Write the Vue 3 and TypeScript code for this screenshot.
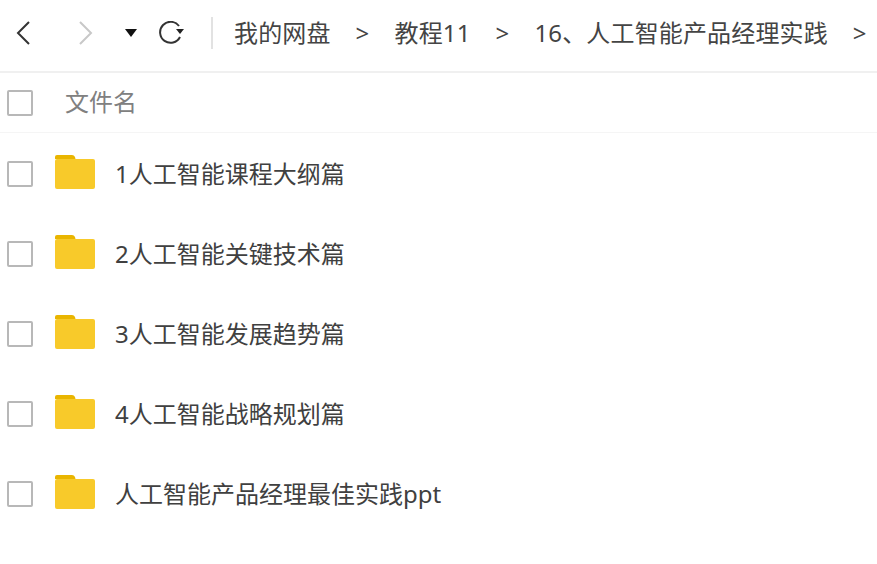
<template>
  <div class="page">
    <div class="toolbar">
      <div class="nav">
        <svg class="ic-back" width="14" height="24" viewBox="0 0 14 24" aria-hidden="true">
          <path d="M13 1 L2 12 L13 23" fill="none" stroke="#333" stroke-width="2" />
        </svg>
        <svg class="ic-forward" width="14" height="24" viewBox="0 0 14 24" aria-hidden="true">
          <path d="M1 1 L12 12 L1 23" fill="none" stroke="#c8c8c8" stroke-width="2" />
        </svg>
        <svg class="ic-caret" width="12" height="8" viewBox="0 0 12 8" aria-hidden="true">
          <path d="M0 0 H12 L6 8 Z" fill="#111" />
        </svg>
        <svg class="ic-refresh" width="26" height="24" viewBox="0 0 26 24" aria-hidden="true">
          <path d="M21 5 A10.5 10.5 0 1 0 22 16" fill="none" stroke="#333" stroke-width="2" />
          <path d="M18 8 H26 L22 13 Z" fill="#222" />
        </svg>
        <span class="divider"></span>
      </div>
      <div class="crumbs">
        <template v-for="c in crumbs" :key="c">
          <span class="crumb">{{ c }}</span>
          <span class="sep">&gt;</span>
        </template>
      </div>
    </div>

    <div class="head">
      <span class="check"></span>
      <span class="head-name">文件名</span>
    </div>

    <div v-for="f in files" :key="f" class="row">
      <span class="check"></span>
      <svg class="folder" width="40" height="34" viewBox="0 0 40 34" aria-hidden="true">
        <path d="M0 2 Q0 0 2 0 H17 Q19 0 20 2 L20.5 4 H0 Z" fill="#e9b500" />
        <path d="M0 6 Q0 4 2 4 H38 Q40 4 40 6 V32 Q40 34 38 34 H2 Q0 34 0 32 Z" fill="#f8ca2a" />
      </svg>
      <span class="name">{{ f }}</span>
    </div>
  </div>
</template>

<script setup lang="ts">
const crumbs: string[] = ['我的网盘', '教程11', '16、人工智能产品经理实践']

const files: string[] = [
  '1人工智能课程大纲篇',
  '2人工智能关键技术篇',
  '3人工智能发展趋势篇',
  '4人工智能战略规划篇',
  '人工智能产品经理最佳实践ppt',
]
</script>

<style>
html,
body {
  margin: 0;
  background: #fff;
  overflow: hidden;
}
</style>

<style scoped>
.page {
  width: 877px;
  height: 564px;
  overflow: hidden;
  font-family: "Noto Sans", "Noto Sans CJK SC", sans-serif;
  color: #3b3b3b;
}

.toolbar {
  display: flex;
  align-items: center;
  height: 66px;
  padding-bottom: 5px;
  border-bottom: 2px solid #f0f0f0;
  white-space: nowrap;
}

.nav {
  display: flex;
  align-items: center;
  flex: none;
  padding-left: 16px;
}

.ic-back { margin-right: 49px; }
.ic-forward { margin-right: 32px; }
.ic-caret { margin-right: 22px; }
.ic-refresh { margin-left: -1px; margin-right: 27px; }

.divider {
  width: 2px;
  height: 32px;
  background: #e2e2e2;
}

.crumbs {
  display: flex;
  align-items: center;
  margin-left: 21px;
  font-size: 24px;
  line-height: 32px;
  letter-spacing: 0.15px;
  color: #444;
}

.sep {
  margin: 0 25px;
  color: #444;
}

.head {
  display: flex;
  align-items: center;
  height: 59px;
  padding-left: 7px;
  border-bottom: 1px solid #f5f5f5;
  margin-bottom: 1px;
}

.head-name {
  margin-left: 32px;
  margin-bottom: 2px;
  font-size: 24px;
  line-height: 32px;
  color: #808080;
}

.row {
  display: flex;
  align-items: center;
  height: 80px;
  padding-left: 7px;
}

.check {
  flex: none;
  width: 26px;
  height: 26px;
  box-sizing: border-box;
  border: 2px solid #b8b8b8;
  border-radius: 2px;
}

.folder {
  flex: none;
  margin-left: 22px;
  margin-top: -4px;
}

.name {
  margin-left: 20px;
  font-size: 24px;
  line-height: 32px;
  color: #404040;
}
</style>
